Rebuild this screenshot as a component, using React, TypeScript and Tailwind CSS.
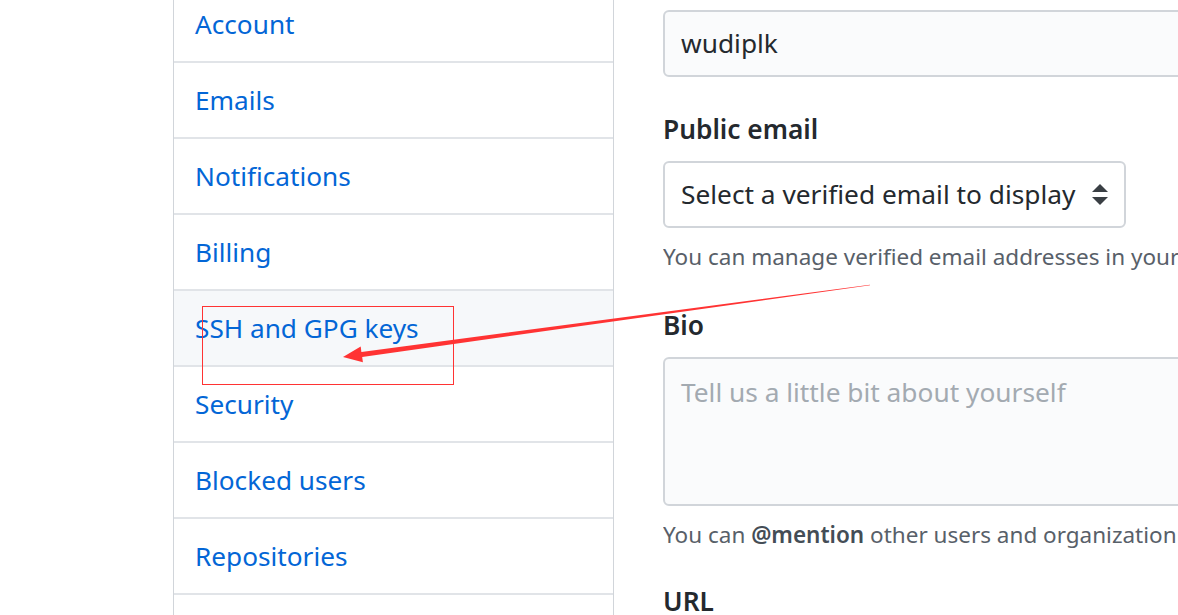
const items = [
  "Account",
  "Emails",
  "Notifications",
  "Billing",
  "SSH and GPG keys",
  "Security",
  "Blocked users",
  "Repositories",
  "",
]

const Sidebar = () => {
  return (
    <nav className="w-[441px] shrink-0 -mt-[13px] border-x border-[#d1d5da]">
      {items.map((item, i) => (
        <div
          key={i}
          className={
            item === "SSH and GPG keys"
              ? "flex h-[76px] items-center border-b-2 border-[#e1e4e8] bg-[#f6f8fa] pl-[21px] pt-[2px] text-[26.2px] text-[#0366d6]"
              : "flex h-[76px] items-center border-b-2 border-[#e1e4e8] bg-white pl-[21px] pt-[2px] text-[26.2px] text-[#0366d6]"
          }
        >
          {item}
        </div>
      ))}
    </nav>
  )
}

const UpDown = () => (
  <svg width="16" height="22" viewBox="0 0 16 22" className="shrink-0">
    <path d="M8 0 L16 8 L0 8 Z" fill="#3a3f44" />
    <path d="M0 13 L16 13 L8 21 Z" fill="#3a3f44" />
  </svg>
)

const Arrow = () => (
  <svg
    width="1178"
    height="615"
    viewBox="0 0 1178 615"
    className="pointer-events-none absolute left-0 top-0"
  >
    <rect x="202.5" y="306.5" width="251" height="78" fill="none" stroke="#f33" strokeWidth="1" />
    <polygon
      points="343,357 362.9,362.3 362.2,356.9 870,285.3 870,284.7 361.4,351.9 360.7,346.5"
      fill="#f33"
    />
  </svg>
)

export default function App() {
  return (
    <div className="relative h-[615px] w-[1178px] overflow-hidden bg-white font-['Noto_Sans',sans-serif]">
      <div className="flex pl-[173px]">
        <Sidebar />
        <main className="ml-[49px] min-w-0 flex-1 overflow-hidden pt-[10px] text-[#24292e]">
          <div className="flex h-[67px] w-[720px] items-center rounded-[6px] border-2 border-[#d1d5da] bg-[#fafbfc] pl-[16px] text-[26.3px]">
            wudiplk
          </div>
          <div className="mt-[32px] h-[40px] text-[26.3px] font-semibold leading-[40px]">Public email</div>
          <div className="mt-[12px] flex h-[67px] w-[463px] items-center justify-between rounded-[6px] border-2 border-[#d1d5da] bg-white pl-[16px] pr-[16px] text-[26.3px]">
            <span>Select a verified email to display</span>
            <UpDown />
          </div>
          <p className="mt-[14px] h-[30px] whitespace-nowrap text-[22.5px] leading-[30px] text-[#586069]">
            You can manage verified email addresses in your
          </p>
          <div className="mt-[33px] h-[40px] text-[26.3px] font-semibold leading-[40px]">Bio</div>
          <div className="mt-[12px] h-[149px] w-[720px] rounded-[6px] border-2 border-[#d1d5da] bg-[#fafbfc] pl-[16px] pt-[14px] text-[26.3px] text-[#a3aab1]">
            Tell us a little bit about yourself
          </div>
          <p className="mt-[14px] h-[30px] whitespace-nowrap text-[22.5px] leading-[30px] text-[#586069]">
            You can <span className="font-semibold text-[#444d56]">@mention</span> other users and organization
          </p>
          <div className="mt-[31px] h-[40px] text-[26.3px] font-semibold leading-[40px]">URL</div>
        </main>
      </div>
      <Arrow />
    </div>
  )
}
